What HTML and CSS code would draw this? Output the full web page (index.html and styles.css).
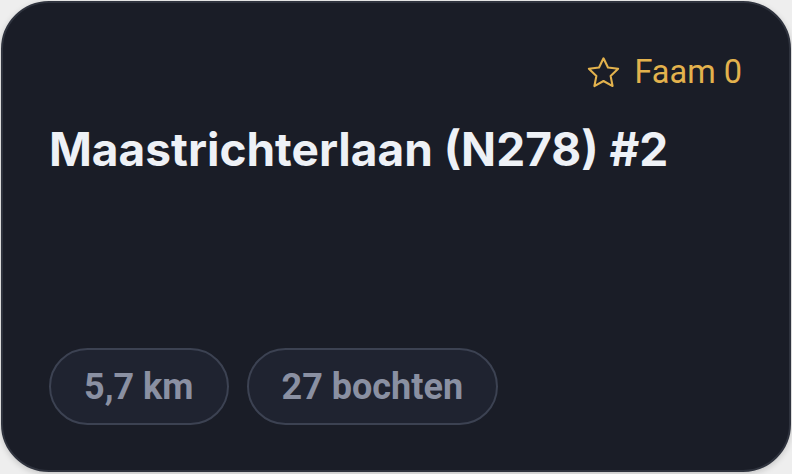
FILE: index.html
```html
<!DOCTYPE html>
<html lang="nl">
<head>
<meta charset="utf-8">
<title>Maastrichterlaan (N278) #2</title>
<link rel="stylesheet" href="styles.css">
</head>
<body>
<div class="card">
  <div class="card-head">
    <span class="fame">
      <svg class="star" viewBox="0 0 24 24" width="37" height="37" aria-hidden="true">
        <path d="M12 2.8l2.9 6 6.6.8-4.9 4.6 1.3 6.6L12 17.5l-5.9 3.3 1.3-6.6-4.9-4.6 6.6-.8z" fill="none" stroke="currentColor" stroke-width="1.35" stroke-linejoin="round"/>
      </svg>
      <span class="fame-text">Faam 0</span>
    </span>
  </div>
  <h1 class="title">Maastrichterlaan (N278) #2</h1>
  <div class="spacer"></div>
  <div class="pills">
    <span class="pill">5,7 km</span>
    <span class="pill">27 bochten</span>
  </div>
</div>
</body>
</html>
```

FILE: styles.css
```css
html, body {
  margin: 0;
  padding: 0;
}
body {
  width: 792px;
  height: 474px;
  background: #eeeeee;
  font-family: Inter, "Liberation Sans", sans-serif;
  overflow: hidden;
}
.card {
  box-sizing: border-box;
  width: 790px;
  height: 471px;
  margin: 1px 1px 2px 1px;
  background: #1a1d27;
  border: 2px solid #2f333e;
  border-radius: 48px;
  box-shadow: 0 2px 6px rgba(0,0,0,0.18);
  display: flex;
  flex-direction: column;
  padding: 49px 47px 45px 46px;
}
.card-head {
  display: flex;
  justify-content: flex-end;
  height: 40px;
  align-items: center;
}
.fame {
  display: flex;
  align-items: center;
  gap: 12px;
  color: #e3b24d;
}
.star {
  display: block;
  margin-right: 0;
}
.fame-text {
  font-family: Roboto, sans-serif;
  font-weight: 400;
  font-size: 32.5px;
  line-height: 40px;
}
.title {
  margin: 30px 0 0 0;
  font-family: Inter, sans-serif;
  font-weight: 700;
  font-size: 46px;
  line-height: 54px;
  color: #eef1f6;
  letter-spacing: 0;
}
.spacer {
  flex: 1;
}
.pills {
  display: flex;
  gap: 18px;
}
.pill {
  box-sizing: border-box;
  height: 77px;
  padding: 0 33px;
  display: flex;
  align-items: center;
  border: 2px solid #3c4252;
  border-radius: 40px;
  background: #1f2330;
  color: #8a90a2;
  font-family: Roboto, sans-serif;
  font-weight: 700;
  font-size: 36px;
}
```
